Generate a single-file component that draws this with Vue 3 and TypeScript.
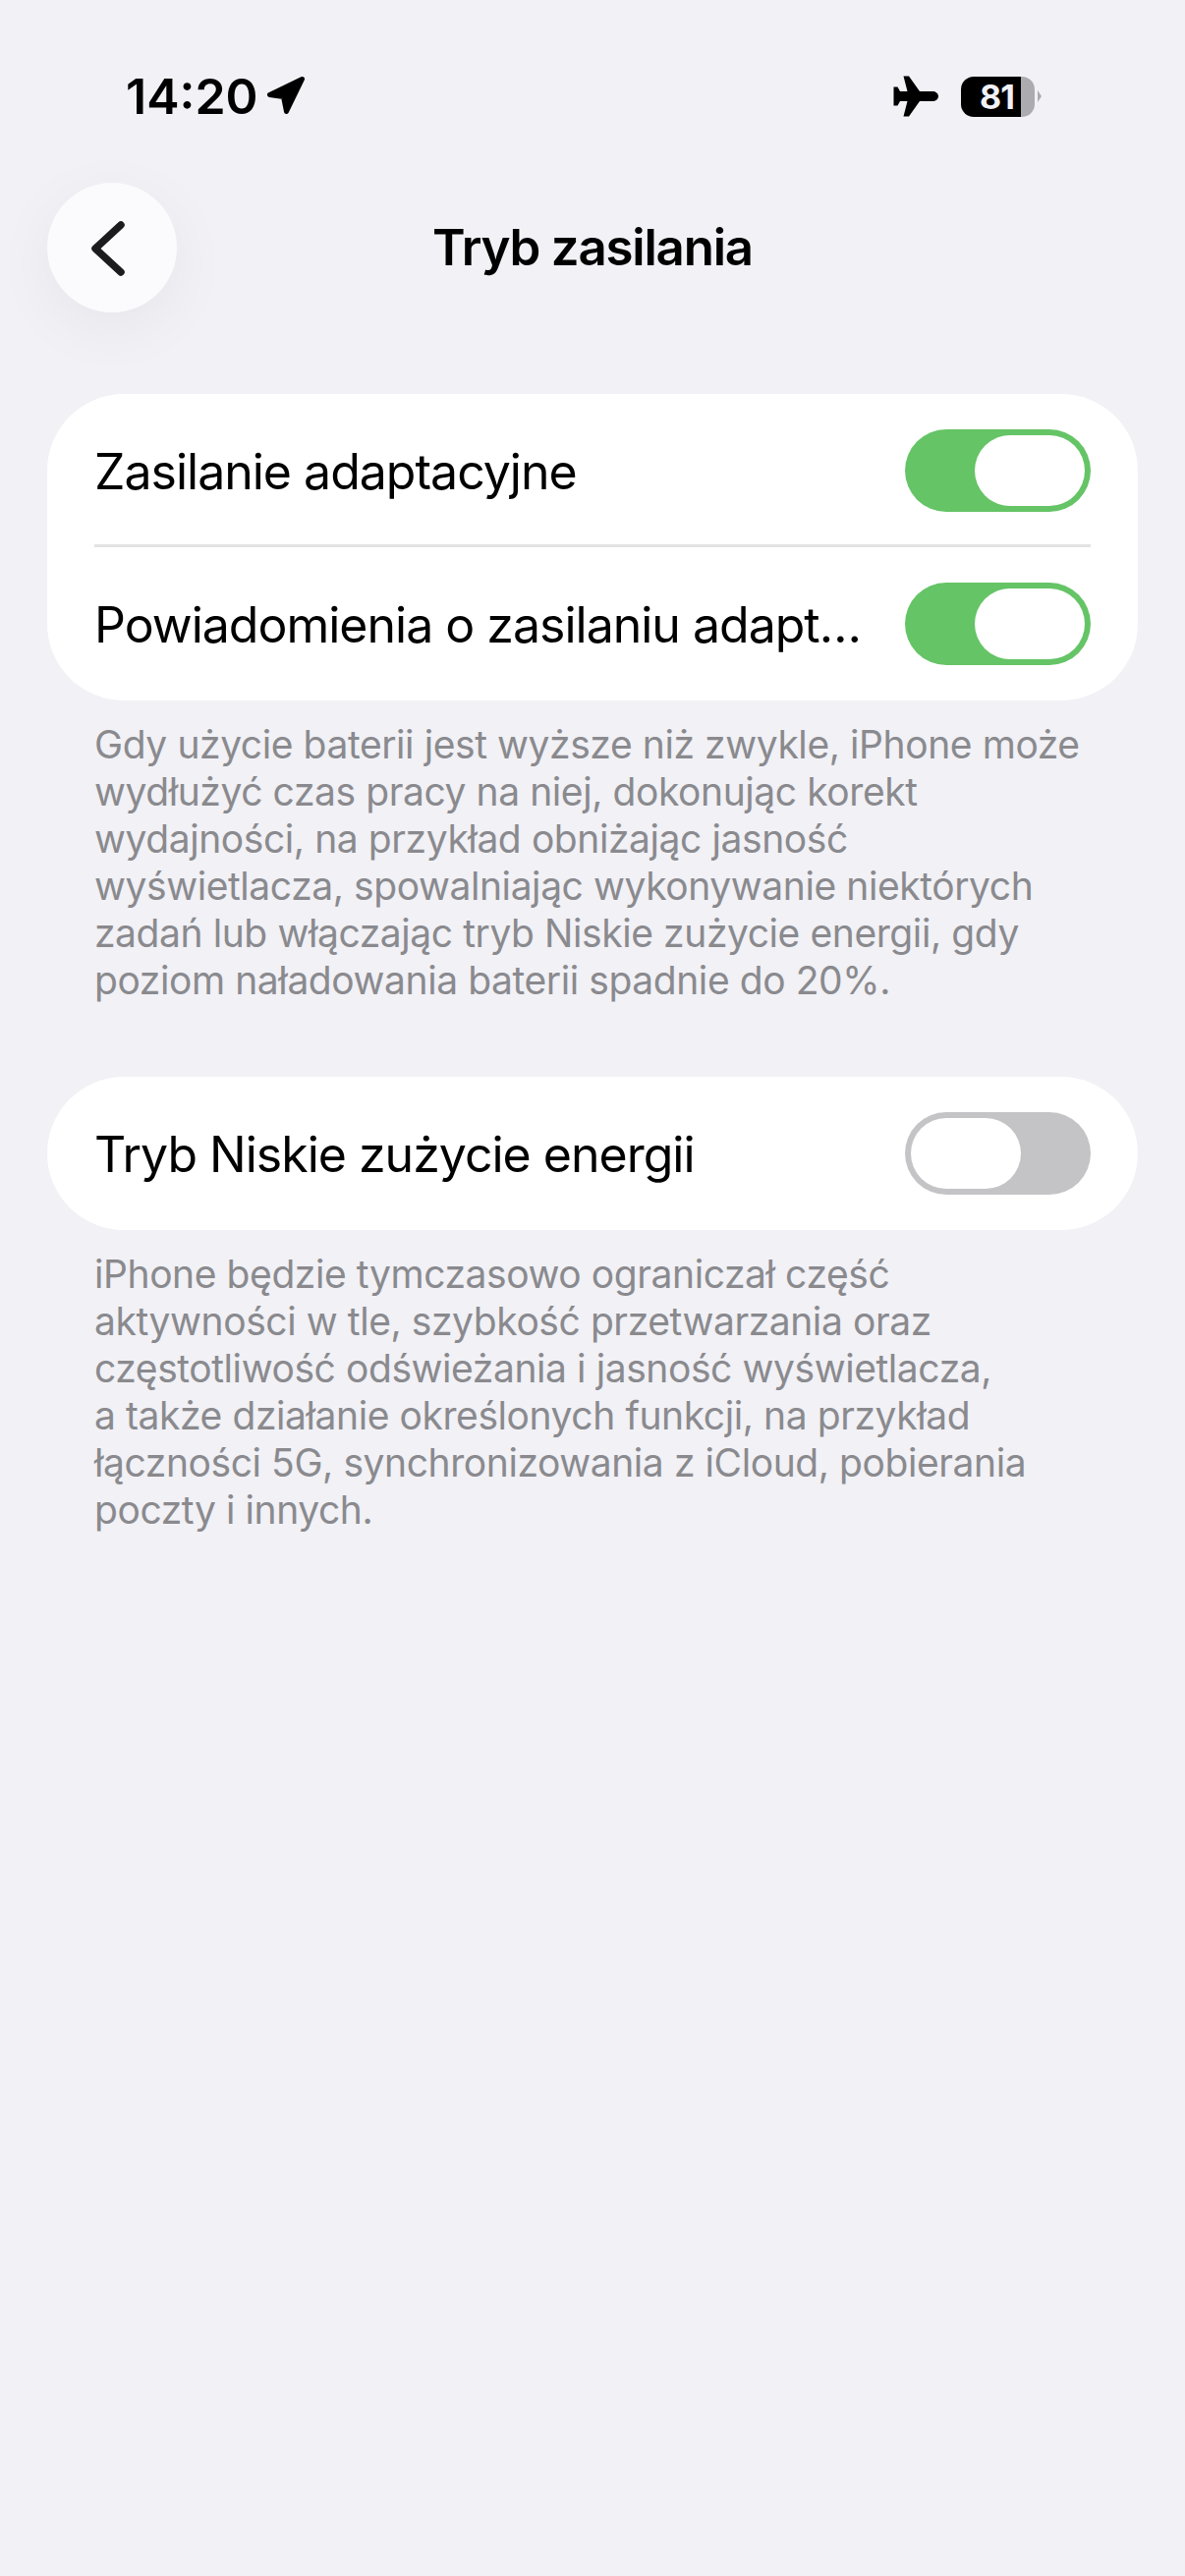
<script setup lang="ts">
interface Row { label: string; on: boolean }
const powerRows: Row[] = [
  { label: 'Zasilanie adaptacyjne', on: true },
  { label: 'Powiadomienia o zasilaniu adapt…', on: true },
]
const lowRows: Row[] = [{ label: 'Tryb Niskie zużycie energii', on: false }]
const powerNote = [
  'Gdy użycie baterii jest wyższe niż zwykle, iPhone może',
  'wydłużyć czas pracy na niej, dokonując korekt',
  'wydajności, na przykład obniżając jasność',
  'wyświetlacza, spowalniając wykonywanie niektórych',
  'zadań lub włączając tryb Niskie zużycie energii, gdy',
  'poziom naładowania baterii spadnie do 20%.',
]
const lowNote = [
  'iPhone będzie tymczasowo ograniczał część',
  'aktywności w tle, szybkość przetwarzania oraz',
  'częstotliwość odświeżania i jasność wyświetlacza,',
  'a także działanie określonych funkcji, na przykład',
  'łączności 5G, synchronizowania z iCloud, pobierania',
  'poczty i innych.',
]
const groups = [
  { rows: powerRows, note: powerNote },
  { rows: lowRows, note: lowNote },
]
</script>

<template>
  <div class="screen">
    <header class="status">
      <div class="status-left">
        <span class="time">14:20</span>
        <svg class="loc" width="40" height="40" viewBox="0 0 40 40">
          <path d="M36.500 3.500 3.500 19.500 17.500 21.500 20.500 36.500Z" fill="#000" stroke="#000" stroke-width="5" stroke-linejoin="round" />
        </svg>
      </div>
      <div class="status-right">
        <svg class="plane" width="46" height="42" viewBox="0 0 46 42">
          <path d="M46 21c0-3-3-5-6-5H27L16 .5h-5.500L14.500 16H7L4.500 11.500H.5V30.500h4L7 26h7.500l-4 15.500H16L27 26h13c3 0 6-2 6-5Z" fill="#000" />
        </svg>
        <div class="battery">
          <div class="battery-body">
            <span class="battery-fill">81</span>
            <span class="battery-rest"></span>
          </div>
          <span class="battery-cap"></span>
        </div>
      </div>
    </header>

    <nav class="nav">
      <button class="back" type="button" aria-label="Wstecz">
        <svg width="44" height="64" viewBox="0 0 44 64">
          <path d="M35 8 9 32l26 24" fill="none" stroke="#1c1c1e" stroke-width="7.500" stroke-linecap="round" stroke-linejoin="round" />
        </svg>
      </button>
      <h1 class="title">Tryb zasilania</h1>
    </nav>

    <section v-for="(group, g) in groups" :key="g" class="group">
      <div class="card">
        <div v-for="row in group.rows" :key="row.label" class="row">
          <span class="label">{{ row.label }}</span>
          <span class="toggle" :class="{ on: row.on }"><span class="thumb"></span></span>
        </div>
      </div>
      <div class="note">
        <div v-for="line in group.note" :key="line" class="note-line">{{ line }}</div>
      </div>
    </section>
  </div>
</template>

<style>
html, body { margin: 0; background: #f1f1f6; }
</style>

<style scoped>
.screen {
  width: 1206px;
  height: 2622px;
  overflow: hidden;
  background: #f1f1f6;
  font-family: Inter, "Liberation Sans", sans-serif;
  color: #000;
  box-sizing: border-box;
  padding: 0 48px;
}
.status {
  height: 186px;
  margin: 0 -48px;
  padding: 0 146px 0 128px;
  box-sizing: border-box;
  display: flex;
  justify-content: space-between;
  align-items: flex-start;
}
.status-left { display: flex; align-items: center; gap: 8px; margin-top: 68px; height: 60px; }
.time { font-size: 50px; font-weight: 600; line-height: 60px; }
.loc { margin-top: -2px; }
.status-right { display: flex; align-items: center; gap: 23px; margin-top: 77px; height: 42px; }
.battery { display: flex; align-items: center; gap: 3px; }
.battery-body {
  width: 75px;
  height: 41px;
  border-radius: 13px;
  overflow: hidden;
  display: flex;
}
.battery-fill {
  width: 61px;
  background: #000;
  color: #f1f1f6;
  font-size: 34px;
  font-weight: 700;
  line-height: 41px;
  letter-spacing: -1px;
  text-align: center;
  padding-left: 12px;
  box-sizing: border-box;
}
.battery-rest { flex: 1; background: #acacb0; }
.battery-cap {
  width: 0;
  height: 0;
  border-left: 4px solid #acacb0;
  border-top: 6px solid transparent;
  border-bottom: 6px solid transparent;
}
.nav {
  position: relative;
  height: 132px;
  display: flex;
  align-items: center;
  justify-content: center;
  margin-bottom: 83px;
}
.back {
  position: absolute;
  left: 0;
  top: 0;
  width: 132px;
  height: 132px;
  border: 0;
  padding: 0;
  border-radius: 50%;
  background: #fbfbfe;
  box-shadow: 0 16px 64px rgba(0, 0, 0, 0.05);
  display: flex;
  align-items: center;
  justify-content: center;
}
.back svg { margin: 2px 0 0 -9px; }
.title { margin: 0; font-size: 51px; font-weight: 600; line-height: 60px; letter-spacing: -1.2px; }
.group { margin-bottom: 74px; }
.card { background: #fff; border-radius: 78px; overflow: hidden; }
.row {
  height: 156px;
  margin: 0 48px;
  display: flex;
  align-items: center;
  justify-content: space-between;
  position: relative;
}
.row:not(:last-child)::after {
  content: "";
  position: absolute;
  left: 0;
  right: 0;
  bottom: 0;
  height: 3px;
  background: #e3e3e5;
}
.label { font-size: 50px; line-height: 60px; white-space: nowrap; letter-spacing: -1px; margin-top: 1px; }
.toggle {
  width: 189px;
  height: 84px;
  border-radius: 42px;
  background: #c4c4c6;
  padding: 6px;
  box-sizing: border-box;
  display: flex;
  justify-content: flex-start;
}
.toggle.on { background: #65c466; justify-content: flex-end; }
.thumb { width: 112px; height: 72px; border-radius: 36px; background: #fff; }
.note { margin: 21px 48px 0; color: #8a8a8e; font-size: 39px; line-height: 48px; letter-spacing: -0.42px; }
.note-line { white-space: nowrap; }
</style>
